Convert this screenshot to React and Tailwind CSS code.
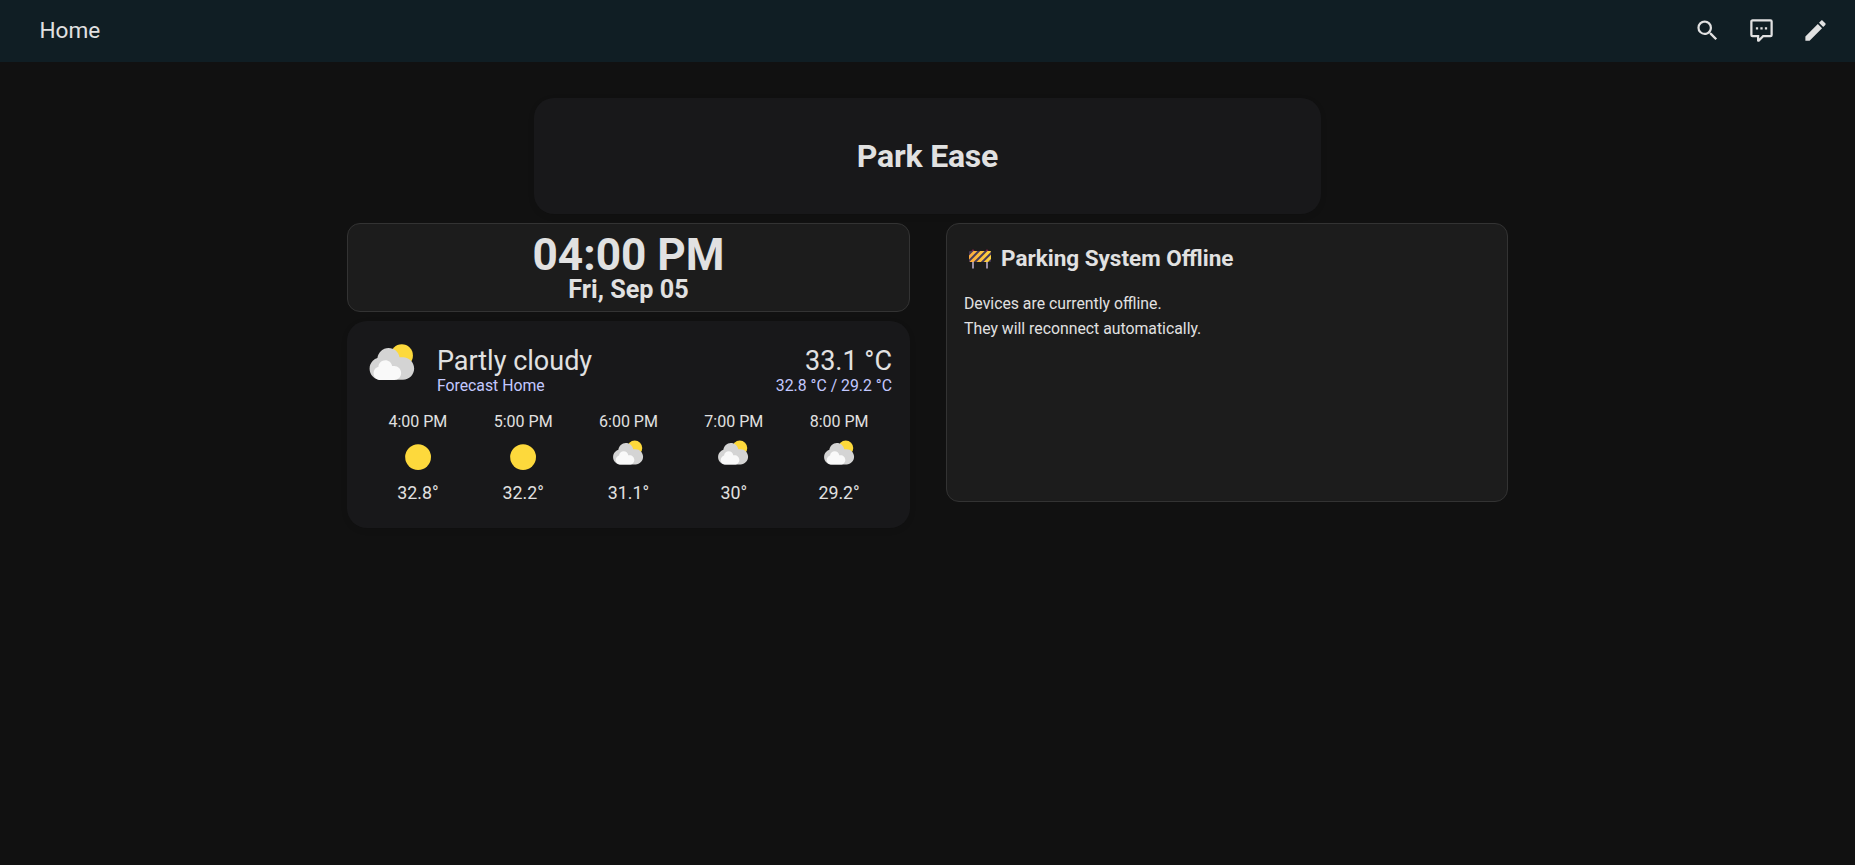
const MAGNIFY =
  "M9.5,3A6.5,6.5 0 0,1 16,9.5C16,11.11 15.41,12.59 14.44,13.73L14.71,14H15.5L20.5,19L19,20.5L14,15.5V14.71L13.73,14.44C12.59,15.41 11.11,16 9.5,16A6.5,6.5 0 0,1 3,9.5A6.5,6.5 0 0,1 9.5,3M9.5,5C7,5 5,7 5,9.5C5,12 7,14 9.5,14C12,14 14,12 14,9.5C14,7 12,5 9.5,5Z";
const COMMENT =
  "M9,22A1,1 0 0,1 8,21V18H4A2,2 0 0,1 2,16V4C2,2.89 2.9,2 4,2H20A2,2 0 0,1 22,4V16A2,2 0 0,1 20,18H13.9L10.2,21.71C10,21.9 9.75,22 9.5,22V22H9M10,16V19.08L13.08,16H20V4H4V16H10M17,11H15V9H17V11M13,11H11V9H13V11M9,11H7V9H9V11Z";
const PENCIL =
  "M20.71,7.04C21.1,6.65 21.1,6 20.71,5.63L18.37,3.29C18,2.9 17.35,2.9 16.96,3.29L15.12,5.12L18.87,8.87M3,17.25V21H6.75L17.81,9.93L14.06,6.18L3,17.25Z";

const HOURS = [
  { time: "4:00 PM", kind: "sunny", temp: "32.8°" },
  { time: "5:00 PM", kind: "sunny", temp: "32.2°" },
  { time: "6:00 PM", kind: "partly", temp: "31.1°" },
  { time: "7:00 PM", kind: "partly", temp: "30°" },
  { time: "8:00 PM", kind: "partly", temp: "29.2°" },
];

function HeaderIcon({ d, label }) {
  return (
    <button aria-label={label} className="flex size-[54px] items-center justify-center">
      <svg viewBox="0 0 24 24" className="size-[27px] fill-[#e1e1e1]">
        <path d={d} />
      </svg>
    </button>
  );
}

function WeatherIcon({ kind, className }) {
  return (
    <svg viewBox="0 0 17 17" className={className}>
      {kind === "sunny" ? (
        <circle cx="8.4" cy="8.4" r="6" fill="#fdd93c" />
      ) : (
        <>
          <circle cx="11.497" cy="4.211" r="3.484" fill="#fdd93c" />
          <path
            fill="#d4d4d4"
            d="m3.8863 5.035c-0.54892 0.16898-1.04 0.46637-1.4372 0.8636-0.63077 0.63024-1.0206 1.4933-1.0206 2.455 0 1.9251 1.5589 3.4682 3.4837 3.4682h6.9688c1.9251 0 3.484-1.5981 3.484-3.5232 0-1.9251-1.5589-3.5232-3.484-3.5232h-1.0834c-0.25294-1.6916-1.6986-2.9083-3.4463-2.9083-1.7995 0-3.2805 1.4153-3.465 3.1679"
          />
          <path
            fill="#f9f9f9"
            d="m4.1996 7.6995c-0.33902 0.10407-0.64276 0.28787-0.88794 0.5334-0.39017 0.38982-0.63147 0.92322-0.63147 1.5176 0 1.1896 0.96414 2.1431 2.1537 2.1431h4.3071c1.1896 0 2.153-0.98742 2.153-2.1777 0-1.1896-0.96344-2.1777-2.153-2.1777h-0.66992c-0.15593-1.0449-1.0499-1.7974-2.1297-1.7974-1.112 0-2.0274 0.87524-2.1417 1.9586"
          />
        </>
      )}
    </svg>
  );
}

function Barrier() {
  return (
    <svg viewBox="0 0 22 20" className="mt-[2px] h-[20px] w-[22px]">
      <defs>
        <linearGradient id="board" x1="0" x2="1" y1="0" y2="0">
          <stop offset="0" stopColor="#ffa83c" />
          <stop offset="1" stopColor="#fcd53f" />
        </linearGradient>
        <clipPath id="boardClip">
          <rect x="0" y="2" width="22" height="11" rx="1" />
        </clipPath>
      </defs>
      <rect x="3" y="12" width="2" height="7.5" fill="#998ea4" />
      <rect x="17" y="12" width="2" height="7.5" fill="#998ea4" />
      <circle cx="4" cy="1.8" r="1.3" fill="#7d1f45" />
      <circle cx="18" cy="1.8" r="1.3" fill="#7d1f45" />
      <g clipPath="url(#boardClip)">
        <rect x="0" y="2" width="22" height="11" fill="#483a58" />
        <path
          fill="url(#board)"
          d="M-1 7.5L4.5 2H8.4L-1 11.4ZM0.3 13L11.3 2H15.6L4.6 13ZM7.5 13L18.5 2H22.8L11.8 13ZM14.7 13L23 4.7V9L19 13Z"
        />
      </g>
    </svg>
  );
}

export default function App() {
  return (
    <div className="min-h-[865px] bg-[#111111] font-['Roboto',sans-serif] text-[#e1e1e1]">
      <header className="flex h-[62px] items-center justify-between bg-[#101e24] pr-[13px] pb-px pl-[39.5px]">
        <h1 className="text-[22.6px] leading-[22px]">Home</h1>
        <nav className="flex">
          <HeaderIcon d={MAGNIFY} label="Search" />
          <HeaderIcon d={COMMENT} label="Assist" />
          <HeaderIcon d={PENCIL} label="Edit" />
        </nav>
      </header>

      <main className="mx-auto w-[1161px] pt-9">
        <section className="mx-auto flex h-[116px] w-[787px] items-center justify-center rounded-[20px] bg-[#18181a] shadow-[0_2px_6px_rgba(0,0,0,0.1)]">
          <h2 className="text-[32px] leading-[32px] font-bold tracking-[-0.2px]">Park Ease</h2>
        </section>

        <div className="mt-[9px] flex items-start justify-between">
          <div className="flex w-[563px] flex-col gap-[9px]">
            <section className="flex h-[89px] flex-col items-center rounded-[13px] border border-[#333333] bg-[#1c1c1c] pt-[9px] font-bold">
              <div className="text-[44.2px] leading-[44px]">04:00 PM</div>
              <div className="text-[25.2px] leading-[25px]">Fri, Sep 05</div>
            </section>

            <section className="h-[207px] rounded-[20px] bg-[#18181a] pt-[21px] shadow-[0_2px_6px_rgba(0,0,0,0.1)]">
              <div className="flex pr-[18px] pl-[17.5px]">
                <WeatherIcon kind="partly" className="size-[54.4px] shrink-0" />
                <div className="ml-[18px] flex-1 pt-1">
                  <div className="text-[27px] leading-[31px]">Partly cloudy</div>
                  <div className="text-[15.8px] leading-[18px] text-[#c3c8ff]">Forecast Home</div>
                </div>
                <div className="pt-1 text-right">
                  <div className="text-[27px] leading-[31px]">33.1 °C</div>
                  <div className="text-[15.8px] leading-[18px] text-[#c3c8ff]">32.8 °C / 29.2 °C</div>
                </div>
              </div>
              <div className="mt-[17px] flex justify-center">
                {HOURS.map((h) => (
                  <div key={h.time} className="flex w-[105.3px] flex-col items-center">
                    <div className="text-[16px] leading-[18px]">{h.time}</div>
                    <WeatherIcon kind={h.kind} className="mt-[8px] size-[36.6px]" />
                    <div className="mt-[7px] text-[17.8px] leading-[20px]">{h.temp}</div>
                  </div>
                ))}
              </div>
            </section>
          </div>

          <section className="h-[279px] w-[562px] rounded-[13px] border border-[#333333] bg-[#1c1c1c] px-[17px] pt-5">
            <div className="flex items-center gap-[10px] pl-[5px]">
              <Barrier />
              <h2 className="text-[22.5px] leading-[28px] font-bold">Parking System Offline</h2>
            </div>
            <p className="mt-[19px] text-[15.8px] leading-[25px]">
              Devices are currently offline.
              <br />
              They will reconnect automatically.
            </p>
          </section>
        </div>
      </main>
    </div>
  );
}
